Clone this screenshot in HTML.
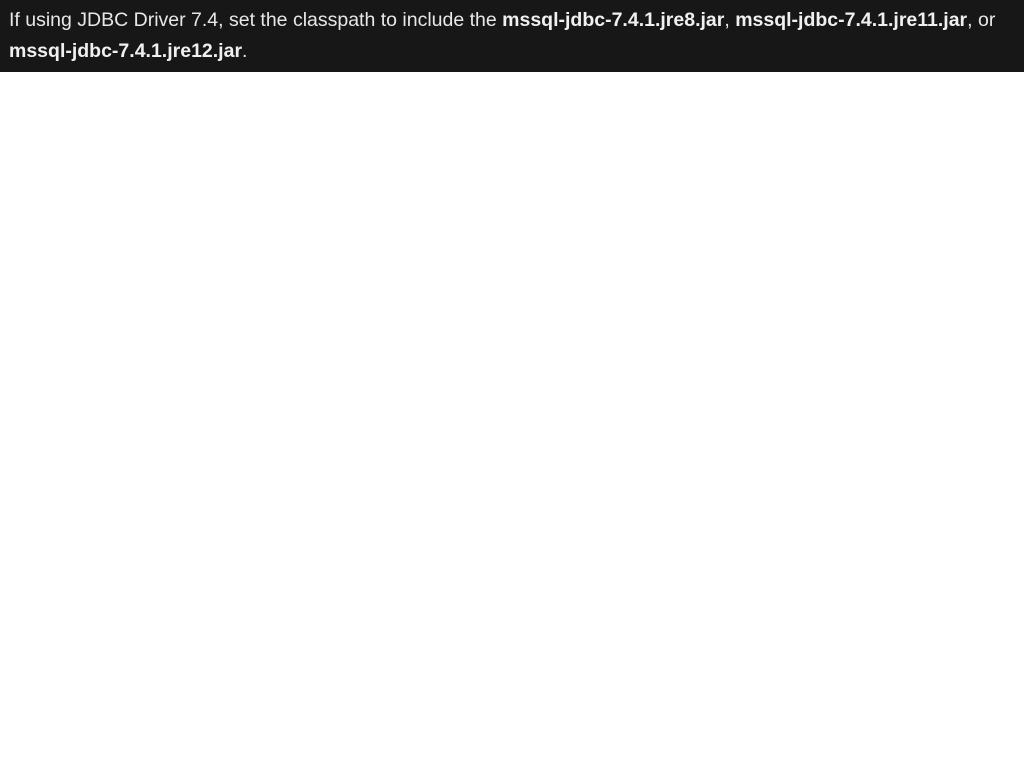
<!DOCTYPE html>
<html><head><meta charset="utf-8"><style>
html,body{margin:0;padding:0;background:#fff;}
.b{position:absolute;left:0;top:0;width:1024px;height:72px;background:#171717;color:#e8e8e8;font-family:"Liberation Sans",sans-serif;font-size:19.5px;line-height:31px;padding:5px 0 0 9px;box-sizing:border-box;white-space:nowrap;}
b{font-weight:bold;color:#f0f0f0;}
</style></head><body>
<div class="b">If using JDBC Driver 7.4, set the classpath to include the <b>mssql-jdbc-7.4.1.jre8.jar</b>, <b>mssql-jdbc-7.4.1.jre11.jar</b>, or<br><b>mssql-jdbc-7.4.1.jre12.jar</b>.</div>
</body></html>
